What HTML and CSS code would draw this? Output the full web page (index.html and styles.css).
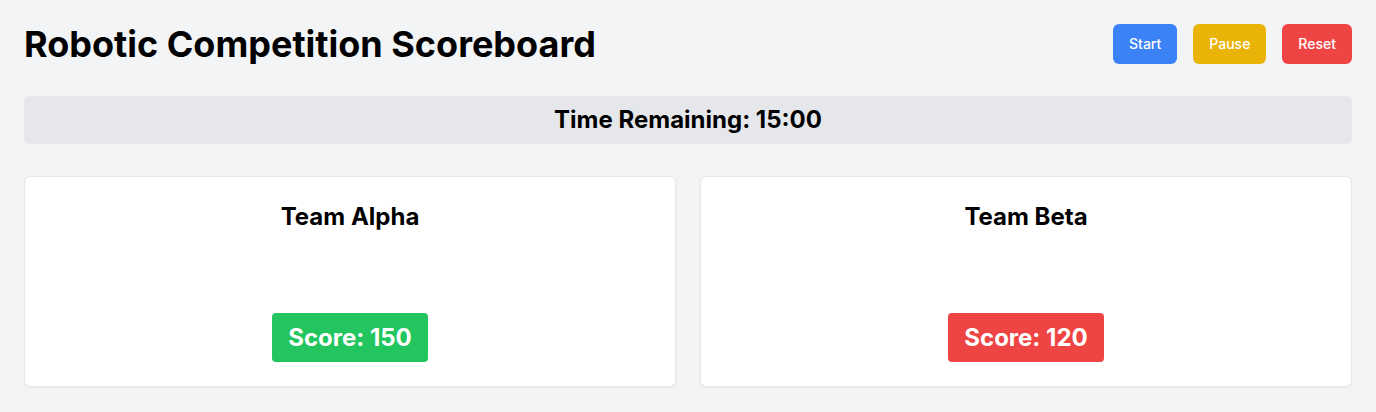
FILE: index.html
```html
<!DOCTYPE html>
<html lang="en">
<head>
<meta charset="utf-8">
<title>Robotic Competition Scoreboard</title>
<link rel="stylesheet" href="styles.css">
</head>
<body>
<div class="page">
  <header class="header">
    <h1 class="title">Robotic Competition Scoreboard</h1>
    <div class="controls">
      <button class="btn btn-start">Start</button>
      <button class="btn btn-pause">Pause</button>
      <button class="btn btn-reset">Reset</button>
    </div>
  </header>
  <div class="timer">Time Remaining: 15:00</div>
  <div class="teams">
    <div class="card">
      <h2 class="team-name">Team Alpha</h2>
      <div class="score score-green">Score: 150</div>
    </div>
    <div class="card">
      <h2 class="team-name">Team Beta</h2>
      <div class="score score-red">Score: 120</div>
    </div>
  </div>
</div>
</body>
</html>
```
FILE: styles.css
```css
* { box-sizing: border-box; }
html, body { margin: 0; padding: 0; }
body {
  background: #f3f4f6;
  font-family: Inter, "Noto Sans", sans-serif;
  color: #000;
}
.page { padding: 24px; }
.header {
  display: flex;
  justify-content: space-between;
  align-items: center;
  margin-bottom: 32px;
}
.title {
  margin: 0;
  font-family: Inter, "Liberation Sans", sans-serif;
  font-size: 36px;
  line-height: 40px;
  font-weight: 700;
}
.controls { display: flex; gap: 16px; }
.btn {
  border: 0;
  border-radius: 6px;
  color: #fff;
  font-family: Inter, sans-serif;
  font-size: 14px;
  line-height: 20px;
  font-weight: 500;
  padding: 10px 16px;
  cursor: pointer;
}
.btn-start { background: #3b82f6; }
.btn-pause { background: #eab308; }
.btn-reset { background: #ef4444; }
.timer {
  background: #e5e7eb;
  border-radius: 6px;
  text-align: center;
  font-size: 24px;
  line-height: 32px;
  font-weight: 700;
  padding: 8px;
  margin-bottom: 32px;
}
.teams {
  display: grid;
  grid-template-columns: 1fr 1fr;
  gap: 24px;
}
.card {
  background: #fff;
  border: 1px solid #e5e7eb;
  border-radius: 6px;
  box-shadow: 0 1px 2px rgba(0,0,0,0.05);
  height: 211px;
  padding: 24px;
  display: flex;
  flex-direction: column;
  align-items: center;
  justify-content: space-between;
}
.team-name {
  margin: 0;
  font-size: 24px;
  line-height: 32px;
  font-weight: 700;
}
.score {
  color: #fff;
  font-size: 24px;
  line-height: 32px;
  font-weight: 700;
  padding: 9px 16px 8px;
  border-radius: 4px;
}
.score-green { background: #22c55e; }
.score-red { background: #ef4444; }
```
